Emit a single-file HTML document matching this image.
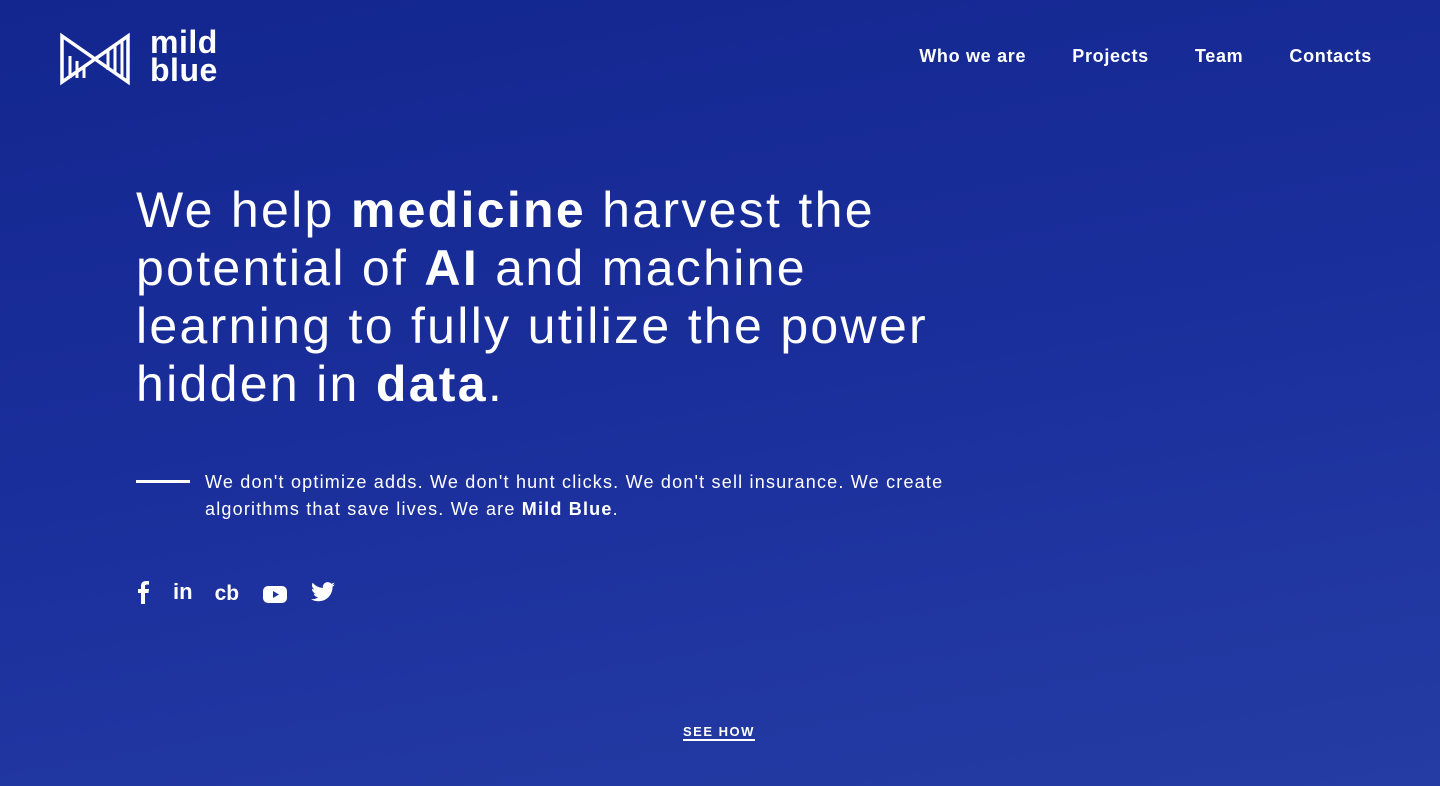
<!DOCTYPE html>
<html><head><meta charset="utf-8"><style>
*{margin:0;padding:0;box-sizing:border-box}
body{width:1440px;height:786px;overflow:hidden;font-family:"Liberation Sans","DejaVu Sans",sans-serif;color:#fff;background:linear-gradient(170deg,#13268f 0%,#1b2f9c 50%,#253ca4 100%);position:relative}
nav{position:absolute;top:46px;right:68px;display:flex;gap:46px;font-weight:bold;font-size:18px;letter-spacing:0.7px}
.logo{position:absolute;left:60px;top:30px}
.lt{position:absolute;left:150px;top:28px;font-weight:bold;font-size:32px;line-height:28px;letter-spacing:0.5px}
h1{position:absolute;left:136px;top:181px;font-weight:normal;font-size:50px;line-height:58px;white-space:nowrap;letter-spacing:2.3px}
.line{position:absolute;left:136px;top:480px;width:54px;height:3px;background:#fff}
p{position:absolute;left:205px;top:469px;font-size:18px;line-height:27px;white-space:nowrap;letter-spacing:1.2px}
.soc{position:absolute;left:136px;top:578px;display:flex;align-items:center;gap:0}
.see{position:absolute;left:683px;top:725px;font-size:13px;font-weight:bold;letter-spacing:1.5px;border-bottom:2px solid #fff;line-height:14px}
</style></head><body>
<svg class="logo" width="72" height="56" viewBox="0 0 72 56" fill="none" stroke="#fff" stroke-width="3.5">
<path d="M2 6 L68 52 L68 6 L2 52 Z"/>
<path d="M10 26V48M17 31V48M24 36V48M48 20V40M55 15V44M62 11V48" stroke-width="3"/>
</svg>
<div class="lt">mild<br>blue</div>
<nav><span>Who we are</span><span>Projects</span><span>Team</span><span>Contacts</span></nav>
<h1>We help <b>medicine</b> harvest the<br>potential of <b>AI</b> and machine<br>learning to fully utilize the power<br>hidden in <b>data</b>.</h1>
<div class="line"></div>
<p>We don't optimize adds. We don't hunt clicks. We don't sell insurance. We create<br>algorithms that save lives. We are <b>Mild Blue</b>.</p>
<div class="soc">
<svg width="14" height="24" viewBox="0 0 14 24" style="margin-right:23px"><path d="M9 24V13h3.5l.5-4H9V6.5c0-1.1.3-1.9 1.9-1.9H13V1.1C12.6 1 11.4 1 10 1 7 1 5 2.8 5 6.1V9H2v4h3v11z" fill="#fff"/></svg>
<span style="font-weight:bold;font-size:22px;margin-right:22px">in</span>
<span style="font-weight:bold;font-size:21px;margin-right:24px;margin-top:4px">cb</span>
<svg width="24" height="18" viewBox="0 0 24 18" style="margin-right:24px;margin-top:6px"><rect x="0" y="0" width="24" height="17" rx="5" fill="#fff"/><path d="M10 5v7l6-3.5z" fill="#1f34a0"/></svg>
<svg width="24" height="20" viewBox="0 0 24 20"><path d="M24 2.4c-.9.4-1.8.6-2.8.8 1-.6 1.8-1.6 2.2-2.7-1 .6-2 1-3.1 1.2A4.9 4.9 0 0 0 11.9 6 14 14 0 0 1 1.7.8a4.9 4.9 0 0 0 1.5 6.6c-.8 0-1.6-.2-2.2-.6 0 2.4 1.7 4.4 3.9 4.8-.7.2-1.5.2-2.2.1.6 2 2.4 3.4 4.6 3.4A9.9 9.9 0 0 1 0 17.1 14 14 0 0 0 7.5 19.3c9.1 0 14-7.5 14-14v-.6c1-.7 1.8-1.6 2.5-2.5z" fill="#fff"/></svg>
</div>
<div class="see">SEE HOW</div>
</body></html>
